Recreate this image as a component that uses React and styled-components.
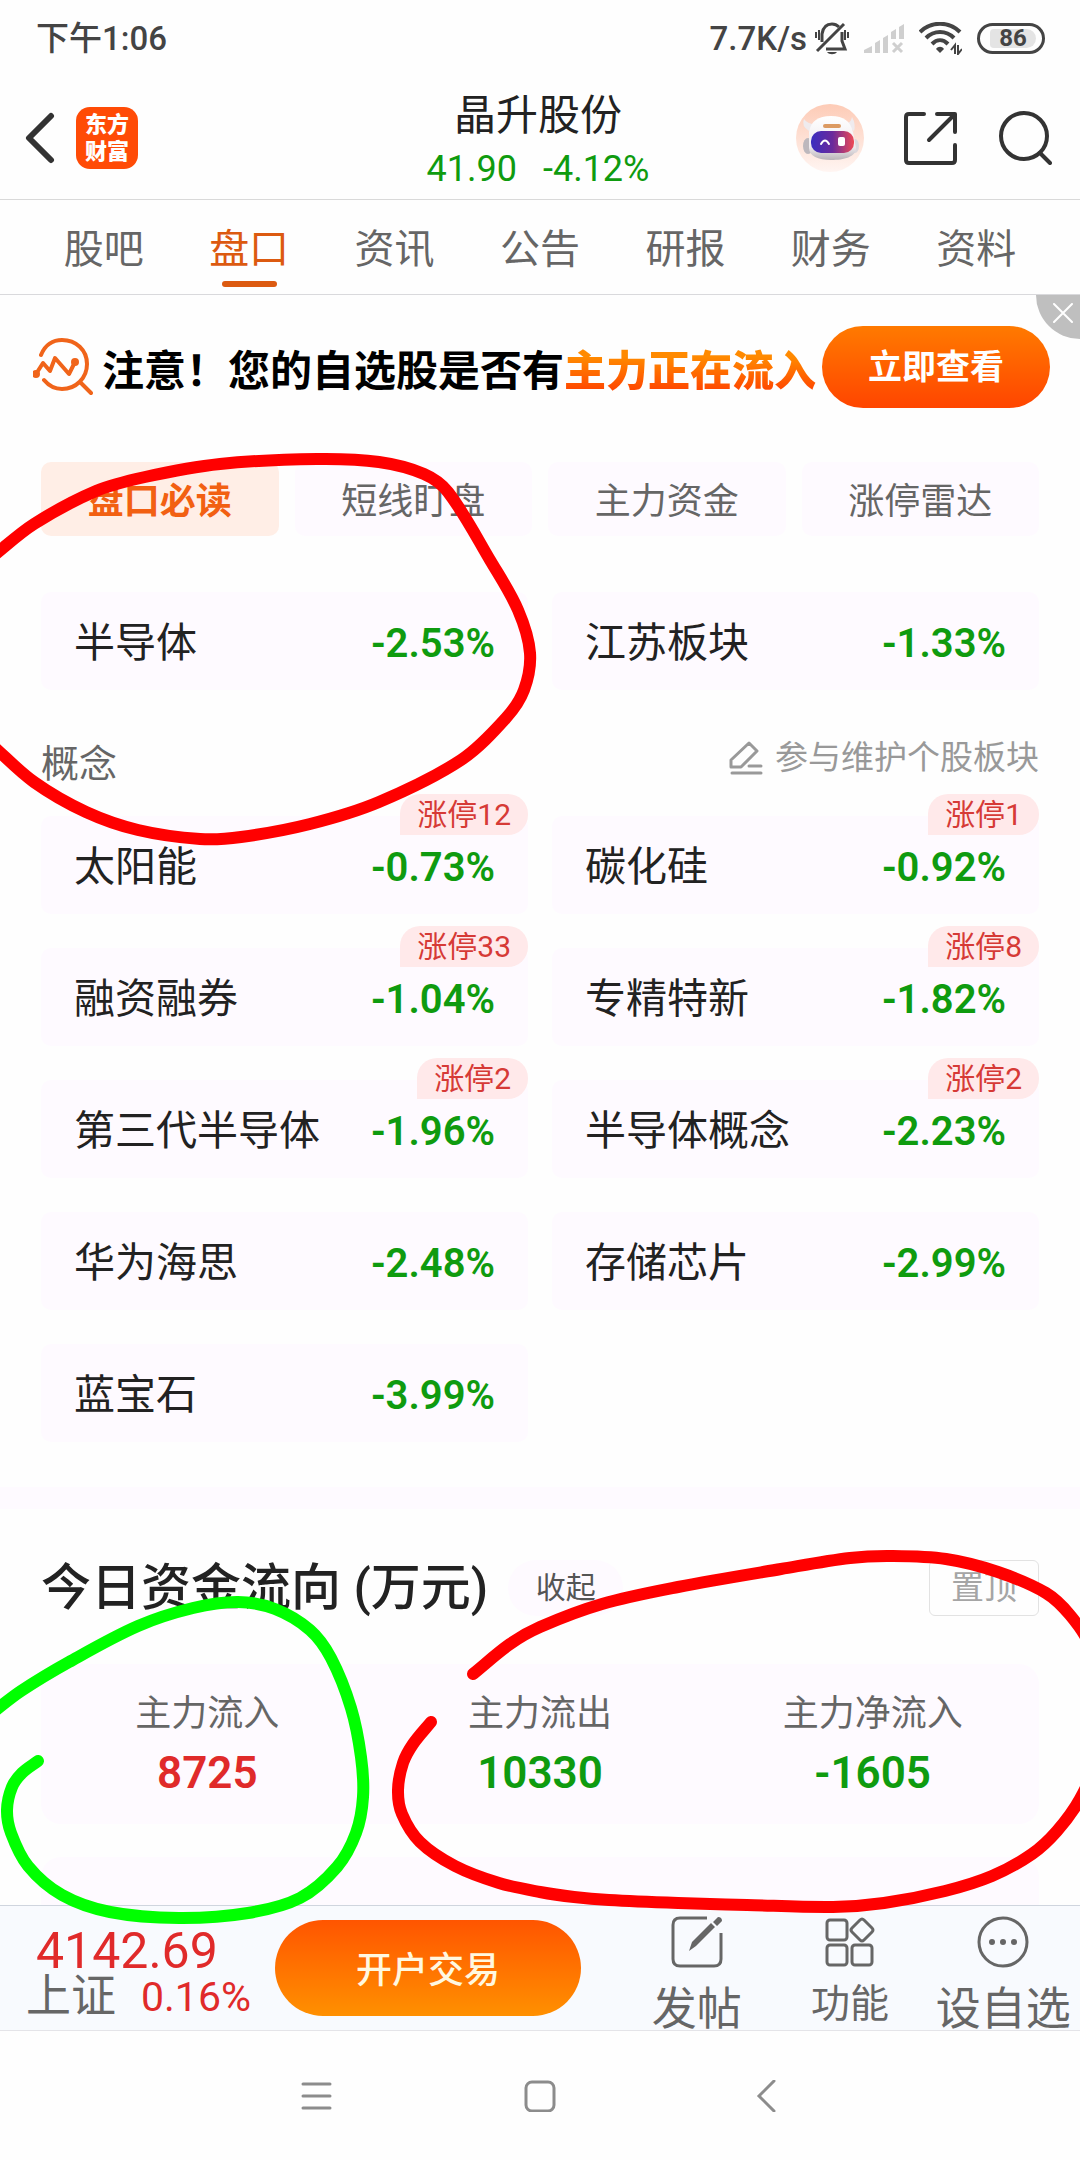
import React from 'react';
import styled, { createGlobalStyle } from 'styled-components';

const GlobalStyle = createGlobalStyle`
  * {
    box-sizing: border-box;
  }

  body {
    margin: 0;
    background: #fefefe;
    color: #222;
    font-family: Roboto, 'Noto Sans CJK SC', sans-serif;
    line-height: 1.2;
  }

  button {
    margin: 0;
    padding: 0;
    border: none;
    background: none;
    color: inherit;
    font: inherit;
    cursor: pointer;
  }

  h1, h2, h3 {
    margin: 0;
    font-weight: 400;
  }

  svg {
    display: block;
    flex: none;
  }
`;

const Page = styled.div`
  position: relative;
  display: flex;
  flex-direction: column;
  height: 100vh;
  overflow: hidden;
`;

const StatusBar = styled.div`
  display: flex;
  flex: none;
  justify-content: space-between;
  align-items: center;
  height: 76px;
  padding: 1px 35px 0 36px;
  color: #444;
  font-size: 33px;
  font-weight: 500;
`;

const StatusIcons = styled.div`
  display: flex;
  align-items: center;
  gap: 15px;
`;

const Speed = styled.div`
  display: flex;
  align-items: center;
  gap: 8px;
`;

const Battery = styled.span`
  display: flex;
  align-items: center;
  width: 68px;
  height: 31px;
  padding: 0 4px;
  border: 3px solid #444;
  border-radius: 16px;

  span {
    flex: 1;
    margin: 0 2px 0 6px;
    border-radius: 4px 10px 10px 4px;
    background: #e4e4e4;
    font-size: 24px;
    font-weight: 700;
    line-height: 19px;
    text-align: center;
  }
`;

const Header = styled.header`
  display: grid;
  flex: none;
  grid-template-columns: 1fr auto 1fr;
  align-items: center;
  height: 124px;
  padding: 0 28px 0 24px;
  border-bottom: 1px solid #d9d9d9;
`;

const HeaderLeft = styled.div`
  display: flex;
  align-items: center;
  gap: 20px;
`;

const HeaderRight = styled.div`
  display: flex;
  justify-content: flex-end;
  align-items: center;
  gap: 40px;
`;

const BrandLogo = styled.span`
  width: 62px;
  padding: 4px 0;
  border-radius: 14px;
  background: #ff4b06;
  color: #fff;
  font-size: 22px;
  font-weight: 900;
  line-height: 27px;
  text-align: center;
`;

const Stock = styled.div`
  padding-top: 8px;
  text-align: center;

  h1 {
    font-size: 42px;
    line-height: 54px;
  }

  p {
    display: flex;
    justify-content: center;
    gap: 26px;
    margin: 0;
    color: #0f9b0f;
    font-size: 36px;
    line-height: 52px;
  }
`;

const Tabs = styled.nav`
  display: flex;
  flex: none;
  padding: 0 31px;
  border-bottom: 1px solid #d9d9dc;
`;

const Tab = styled.button`
  display: flex;
  flex: 1;
  flex-direction: column;
  align-items: center;
  gap: 7px;
  padding: 26px 0 7px;
  color: ${props => (props.$active ? '#dc5a10' : '#666')};
  font-size: 40px;
  line-height: 48px;

  &::after {
    content: '';
    width: 55px;
    height: 6px;
    border-radius: 3px;
    background: ${props => (props.$active ? '#dc5a10' : 'transparent')};
  }
`;

const Content = styled.main`
  flex: 1;
  min-height: 0;
  overflow-y: auto;
  scrollbar-width: none;
`;

const Banner = styled.div`
  position: relative;
  display: flex;
  align-items: center;
  padding: 31px 30px 0 33px;
`;

const BannerText = styled.p`
  flex: 1;
  margin: 0;
  padding: 10px 0 0 9px;
  color: #000;
  font-size: 42px;
  font-weight: 700;
  line-height: 54px;
  white-space: nowrap;

  strong {
    background: linear-gradient(#ff8a00 20%, #ff4a00 85%);
    background-clip: text;
    color: transparent;
  }
`;

const BannerButton = styled.button`
  flex: none;
  width: 228px;
  height: 82px;
  border-radius: 41px;
  background: linear-gradient(#ff7a00, #ff4500);
  color: #fff;
  font-size: 34px;
  font-weight: 700;
`;

const BannerClose = styled.button`
  position: absolute;
  top: 0;
  right: 0;
  display: flex;
  justify-content: flex-end;
  width: 44px;
  height: 44px;
  padding: 8px 7px;
  border-bottom-left-radius: 44px;
  background: #bfbfbf;
`;

const Pills = styled.div`
  display: grid;
  grid-template-columns: repeat(4, 1fr);
  gap: 16px;
  padding: 54px 41px 56px;
`;

const Pill = styled.button`
  height: 74px;
  padding-top: 7px;
  border-radius: 10px;
  background: ${props => (props.$active ? '#ffeee6' : '#fefaff')};
  color: ${props => (props.$active ? '#f26012' : '#666')};
  font-size: 36px;
  font-weight: ${props => (props.$active ? 700 : 400)};
`;

const CardGrid = styled.div`
  display: grid;
  grid-template-columns: 1fr 1fr;
  gap: 34px 24px;
  padding: 0 41px;
`;

const Card = styled.div`
  position: relative;
  display: flex;
  justify-content: space-between;
  align-items: center;
  height: 98px;
  padding: 6px 33px 0;
  border-radius: 10px;
  background: #fefaff;
  font-size: 41px;

  b {
    color: #0f9b0f;
    font-size: 40px;
    font-weight: 600;
  }
`;

const Badge = styled.span`
  position: absolute;
  top: -22px;
  right: 0;
  padding: 0 17px;
  border-radius: 20px 20px 20px 0;
  background: #ffe9ea;
  color: #d63a36;
  font-size: 30px;
  line-height: 41px;
`;

const ConceptHead = styled.div`
  display: flex;
  justify-content: space-between;
  align-items: flex-start;
  padding: 49px 41px 27px;
  color: #666;

  h3 {
    font-size: 38px;
    line-height: 50px;
  }
`;

const EditButton = styled.button`
  display: flex;
  align-items: center;
  gap: 12px;
  color: #999;
  font-size: 33px;
  line-height: 38px;
`;

const Divider = styled.div`
  height: 22px;
  margin-top: 45px;
  background: #fefaff;
`;

const FlowHead = styled.div`
  display: flex;
  align-items: center;
  gap: 20px;
  padding: 49px 41px 46px;

  h2 {
    font-size: 50px;
    font-weight: 500;
    line-height: 60px;
  }
`;

const FoldButton = styled.button`
  width: 115px;
  height: 56px;
  border-radius: 28px;
  background: #fefaff;
  color: #555;
  font-size: 30px;
`;

const PinButton = styled.button`
  width: 110px;
  height: 56px;
  margin-left: auto;
  border: 1px solid #e2e2e2;
  border-radius: 6px;
  color: #a5a5a5;
  font-size: 33px;
`;

const FlowCard = styled.div`
  display: grid;
  grid-template-columns: repeat(3, 1fr);
  min-height: 160px;
  margin: 0 41px 33px;
  padding: 27px 0 15px;
  border-radius: 20px;
  background: #fefaff;
`;

const FlowItem = styled.div`
  display: flex;
  flex-direction: column;
  align-items: center;
  color: #666;
  font-size: 36px;
  line-height: 46px;

  b {
    color: ${props => (props.$up ? '#e02a2a' : '#0f9b0f')};
    font-size: 44px;
    font-weight: 600;
    line-height: 72px;
  }
`;

const BottomBar = styled.footer`
  display: flex;
  flex: none;
  align-items: center;
  height: 126px;
  border-top: 1px solid #cfd5de;
  border-bottom: 1px solid #e4e4e8;
  background: #f8fafe;
`;

const MarketIndex = styled.div`
  width: 275px;
  padding: 9px 0 0 26px;
  color: #e02a2a;

  strong {
    display: block;
    padding-left: 10px;
    font-size: 50px;
    font-weight: 400;
    line-height: 48px;
  }

  p {
    display: flex;
    align-items: center;
    gap: 25px;
    margin: 0;
    font-size: 41px;
    line-height: 44px;
  }

  span {
    color: #666;
    font-size: 45px;
  }
`;

const TradeButton = styled.button`
  width: 306px;
  height: 96px;
  margin-right: 39px;
  padding-top: 7px;
  border-radius: 48px;
  background: linear-gradient(#ff5500, #ff9000);
  color: #fff8e0;
  font-size: 36px;
  font-weight: 500;
`;

const Actions = styled.div`
  display: grid;
  flex: 1;
  grid-template-columns: repeat(3, 1fr);
  align-self: flex-start;
  align-items: start;
`;

const Action = styled.button`
  display: flex;
  flex-direction: column;
  align-items: center;
  gap: 15px;
  padding-top: 10px;
  color: #666;
  font-size: ${props => (props.$small ? 39 : 45)}px;
  line-height: ${props => (props.$small ? 42 : 54)}px;
  white-space: nowrap;
`;

const SystemNav = styled.div`
  display: flex;
  flex: none;
  justify-content: center;
  align-items: center;
  gap: 192px;
  height: 129px;
`;

const Doodle = styled.svg`
  position: absolute;
  top: 0;
  left: 0;
  width: 100%;
  pointer-events: none;
`;

const tabs = ['股吧', '盘口', '资讯', '公告', '研报', '财务', '资料'];
const pills = ['盘口必读', '短线盯盘', '主力资金', '涨停雷达'];

const sectors = [
  { name: '半导体', change: '-2.53%' },
  { name: '江苏板块', change: '-1.33%' },
];

const concepts = [
  { name: '太阳能', change: '-0.73%', limitUp: 12 },
  { name: '碳化硅', change: '-0.92%', limitUp: 1 },
  { name: '融资融券', change: '-1.04%', limitUp: 33 },
  { name: '专精特新', change: '-1.82%', limitUp: 8 },
  { name: '第三代半导体', change: '-1.96%', limitUp: 2 },
  { name: '半导体概念', change: '-2.23%', limitUp: 2 },
  { name: '华为海思', change: '-2.48%' },
  { name: '存储芯片', change: '-2.99%' },
  { name: '蓝宝石', change: '-3.99%' },
];

const flows = [
  { label: '主力流入', value: '8725', up: true },
  { label: '主力流出', value: '10330' },
  { label: '主力净流入', value: '-1605' },
];

// hand drawn marker lines
const strokes = [
  {
    color: '#ff0000',
    points: [
      [-8, 557], [34, 524], [96, 491], [145, 477], [220, 464], [317, 459], [379, 462],
      [424, 474], [448, 492], [490, 560], [518, 610], [530, 653], [524, 690], [506, 718],
      [461, 760], [379, 802], [310, 824], [241, 837], [200, 839], [138, 830], [86, 812],
      [34, 782], [-8, 745],
    ],
  },
  {
    color: '#00ff00',
    points: [
      [-8, 1713], [21, 1691], [69, 1662], [138, 1626], [193, 1608], [238, 1602], [275, 1609],
      [310, 1630], [331, 1658], [351, 1708], [361, 1757], [363, 1797], [356, 1833],
      [337, 1867], [300, 1898], [248, 1913], [179, 1918], [110, 1912], [62, 1895],
      [28, 1866], [11, 1833], [7, 1810], [12, 1787], [22, 1773], [38, 1761],
    ],
  },
  {
    color: '#ff0000',
    points: [
      [473, 1674], [510, 1644], [540, 1627], [602, 1604], [678, 1587], [781, 1569],
      [850, 1558], [891, 1556], [946, 1559], [998, 1572], [1046, 1593], [1070, 1615],
      [1090, 1646], [1100, 1700], [1096, 1760], [1080, 1799], [1057, 1831], [1032, 1854],
      [992, 1876], [945, 1891], [884, 1903], [833, 1907], [747, 1905], [678, 1903],
      [609, 1900], [574, 1897], [540, 1892], [499, 1883], [455, 1866], [420, 1842],
      [402, 1814], [398, 1790], [403, 1763], [413, 1744], [431, 1722],
    ],
  },
];

const dist = (a, b) => Math.hypot(b[0] - a[0], b[1] - a[1]);

// tangent at every point follows its two neighbours
const toPath = (pts) => {
  const tangents = pts.map((p, i) => {
    const a = pts[i - 1] || p;
    const b = pts[i + 1] || p;
    const len = dist(a, b);
    return [(b[0] - a[0]) / len, (b[1] - a[1]) / len];
  });
  let d = `M${pts[0]}`;
  for (let i = 0; i < pts.length - 1; i++) {
    const [p, q] = [pts[i], pts[i + 1]];
    const [t, u] = [tangents[i], tangents[i + 1]];
    const k = dist(p, q) / 3;
    d += ` C${p[0] + t[0] * k},${p[1] + t[1] * k} ${q[0] - u[0] * k},${q[1] - u[1] * k} ${q}`;
  }
  return d;
};

const MuteIcon = () => (
  <svg width="34" height="33" viewBox="0 0 34 33" fill="none" stroke="#444" strokeWidth="3">
    <path d="M7 20V12C8 5 12 2 17 2c3 0 5 1 7 3M27 10v9l3 8H11" />
    <path d="M2 29L29 2" />
    <path d="M12 30c2 3 8 3 10 0z" fill="#444" stroke="none" />
    <path d="M1 10v6M4 8v10M30 8v10M33 10v6" strokeWidth="2" />
  </svg>
);

const SignalIcon = () => (
  <svg width="40" height="30" viewBox="0 0 40 30" fill="#cfcfcf">
    <path d="M0 29v-3l8-4v7zM11 19l5-3v13h-5zM19 14l5-3v18h-5zM27 8l5-3v10h-5zM35 3l5-3v15h-5z" />
    <path d="M29 19l9 9M38 19l-9 9" stroke="#cfcfcf" strokeWidth="3" />
  </svg>
);

const WifiIcon = () => (
  <svg width="43" height="33" viewBox="0 0 43 33" fill="none" stroke="#444" strokeWidth="4">
    <path d="M1 10C12-1 30-1 41 10M7 16c8-8 20-8 28 0M13 22c5-5 11-5 16 0" />
    <path d="M17 27c2-3 6-3 8 0l-4 4z" fill="#444" stroke="none" />
    <path d="M36 32v-9l-4 5M39 23v9l4-5" strokeWidth="2" />
  </svg>
);

const BackIcon = () => (
  <svg width="32" height="52" viewBox="0 0 32 52" fill="none" stroke="#333" strokeWidth="6" strokeLinecap="round" strokeLinejoin="round">
    <path d="M27 4L5 26l22 22" />
  </svg>
);

const RobotIcon = () => (
  <svg width="68" height="68" viewBox="0 0 68 68">
    <defs>
      <linearGradient id="robotBg" x1="0" y1="0" x2="0" y2="1">
        <stop offset="0" stopColor="#fdcbb6" />
        <stop offset="1" stopColor="#fff5f2" />
      </linearGradient>
      <linearGradient id="robotHead" x1="0" y1="0" x2="0" y2="1">
        <stop offset="0" stopColor="#fff" />
        <stop offset="0.7" stopColor="#efebee" />
        <stop offset="1" stopColor="#b9b3b8" />
      </linearGradient>
      <linearGradient id="robotVisor" x1="0" y1="0" x2="1" y2="0">
        <stop offset="0" stopColor="#3a2fc0" />
        <stop offset="0.5" stopColor="#6a2a9c" />
        <stop offset="1" stopColor="#ee4a55" />
      </linearGradient>
    </defs>
    <circle cx="34" cy="34" r="34" fill="url(#robotBg)" />
    <path d="M8 15q-3 7 5 12l8-7q-9 1-13-5zM56 13q4 7 2 14l-9-7q6-1 7-7z" fill="#efebee" />
    <ellipse cx="12" cy="42" rx="5" ry="8" fill="#bdb8bd" />
    <ellipse cx="59" cy="42" rx="4" ry="7" fill="#ddd8dc" />
    <path d="M13 28C15 17 22 12 35 12s19 5 22 16l3 16c0 9-12 12-25 12s-22-4-22-12z" fill="url(#robotHead)" />
    <rect x="27" y="20" width="18" height="4" rx="2" fill="#dc9a62" />
    <rect x="15" y="27" width="43" height="22" rx="10" fill="url(#robotVisor)" />
    <path d="M25 40q4-7 8 0" fill="none" stroke="#fff" strokeWidth="2" strokeLinecap="round" />
    <rect x="42" y="33" width="7" height="9" rx="2" fill="#fff" />
  </svg>
);

const ShareIcon = () => (
  <svg width="54" height="54" viewBox="0 0 54 54" fill="none" stroke="#333" strokeWidth="4" strokeLinecap="round" strokeLinejoin="round">
    <path d="M20 3H5q-3 0-3 3v43q0 3 3 3h43q3 0 3-3V34M33 3h18v18M50 4L25 29" />
  </svg>
);

const SearchIcon = () => (
  <svg width="54" height="54" viewBox="0 0 54 54" fill="none" stroke="#333" strokeWidth="4" strokeLinecap="round">
    <circle cx="26" cy="25" r="23" />
    <path d="M42 42l10 10" />
  </svg>
);

const TrendIcon = () => (
  <svg width="60" height="58" viewBox="0 0 60 58" fill="none" stroke="#f0641a" strokeWidth="4" strokeLinecap="round" strokeLinejoin="round">
    <path d="M8 17C12 7 20 2 29 2c14 0 25 10 25 24S43 51 29 51c-7 0-13-3-18-9M47 44l11 11" />
    <path d="M3 36l7-11 7 8 5-13 14 16 6-12" />
    <circle cx="3" cy="36" r="2" />
    <circle cx="42" cy="24" r="2" />
  </svg>
);

const PencilIcon = () => (
  <svg width="34" height="34" viewBox="0 0 34 34" fill="none" stroke="#999" strokeWidth="3" strokeLinecap="round" strokeLinejoin="round">
    <path d="M20 2l8 8-16 16H2v-7zM20 25h12M3 32h29" />
  </svg>
);

const PostIcon = () => (
  <svg width="52" height="52" viewBox="0 0 52 52" fill="none" stroke="#666" strokeWidth="3">
    <path d="M36 2H9q-7 0-7 7v34q0 7 7 7h34q7 0 7-7V17" />
    <path d="M18 35l3-9L40 7l4 4-19 19zM42 6l5-5q4 0 4 4l-5 5z" fill="#666" stroke="none" />
  </svg>
);

const GridIcon = () => (
  <svg width="52" height="52" viewBox="0 0 52 52" fill="none" stroke="#666" strokeWidth="3">
    <rect x="3" y="4" width="20" height="20" rx="3" />
    <rect x="3" y="29" width="20" height="20" rx="3" />
    <rect x="28" y="29" width="20" height="20" rx="3" />
    <path d="M36 4q2-2 4 0l8 8q2 2 0 4l-8 8q-2 2-4 0l-8-8q-2-2 0-4z" />
  </svg>
);

const MoreIcon = () => (
  <svg width="52" height="52" viewBox="0 0 52 52" fill="#666">
    <circle cx="26" cy="26" r="24" fill="none" stroke="#666" strokeWidth="3" />
    <circle cx="15" cy="26" r="3" />
    <circle cx="26" cy="26" r="3" />
    <circle cx="37" cy="26" r="3" />
  </svg>
);

const SectorCard = ({ sector }) => (
  <Card>
    <span>{sector.name}</span>
    <b>{sector.change}</b>
    {sector.limitUp && <Badge>涨停{sector.limitUp}</Badge>}
  </Card>
);

class App extends React.Component {
  state = {
    tab: '盘口',
    pill: '盘口必读'
  }

  render() {
    const { tab, pill } = this.state
    return (
      <Page>
        <GlobalStyle />
        <StatusBar>
          <span>下午1:06</span>
          <StatusIcons>
            <Speed>
              <span>7.7K/s</span>
              <MuteIcon />
            </Speed>
            <SignalIcon />
            <WifiIcon />
            <Battery><span>86</span></Battery>
          </StatusIcons>
        </StatusBar>

        <Header>
          <HeaderLeft>
            <button aria-label="返回"><BackIcon /></button>
            <BrandLogo>东方<br />财富</BrandLogo>
          </HeaderLeft>
          <Stock>
            <h1>晶升股份</h1>
            <p>
              <span>41.90</span>
              <span>-4.12%</span>
            </p>
          </Stock>
          <HeaderRight>
            <button aria-label="助手"><RobotIcon /></button>
            <button aria-label="分享"><ShareIcon /></button>
            <button aria-label="搜索"><SearchIcon /></button>
          </HeaderRight>
        </Header>

        <Tabs>
          {tabs.map(name => (
            <Tab key={name} $active={name === tab} onClick={() => this.setState({ tab: name })}>
              {name}
            </Tab>
          ))}
        </Tabs>

        <Content>
          <Banner>
            <TrendIcon />
            <BannerText>注意！您的自选股是否有<strong>主力正在流入</strong></BannerText>
            <BannerButton>立即查看</BannerButton>
            <BannerClose aria-label="关闭">
              <svg width="20" height="20" viewBox="0 0 20 20" stroke="#fff" strokeWidth="2" strokeLinecap="round">
                <path d="M1 1l18 18M19 1L1 19" />
              </svg>
            </BannerClose>
          </Banner>

          <Pills>
            {pills.map(name => (
              <Pill key={name} $active={name === pill} onClick={() => this.setState({ pill: name })}>
                {name}
              </Pill>
            ))}
          </Pills>

          <CardGrid>
            {sectors.map(sector => <SectorCard key={sector.name} sector={sector} />)}
          </CardGrid>

          <ConceptHead>
            <h3>概念</h3>
            <EditButton>
              <PencilIcon />
              参与维护个股板块
            </EditButton>
          </ConceptHead>

          <CardGrid>
            {concepts.map(sector => <SectorCard key={sector.name} sector={sector} />)}
          </CardGrid>

          <Divider />

          <FlowHead>
            <h2>今日资金流向 (万元)</h2>
            <FoldButton>收起</FoldButton>
            <PinButton>置顶</PinButton>
          </FlowHead>
          <FlowCard>
            {flows.map(flow => (
              <FlowItem key={flow.label} $up={flow.up}>
                {flow.label}
                <b>{flow.value}</b>
              </FlowItem>
            ))}
          </FlowCard>
          <FlowCard />
        </Content>

        <BottomBar>
          <MarketIndex>
            <strong>4142.69</strong>
            <p><span>上证</span>0.16%</p>
          </MarketIndex>
          <TradeButton>开户交易</TradeButton>
          <Actions>
            <Action><PostIcon />发帖</Action>
            <Action $small><GridIcon />功能</Action>
            <Action><MoreIcon />设自选</Action>
          </Actions>
        </BottomBar>

        <SystemNav>
          <button aria-label="菜单">
            <svg width="32" height="32" viewBox="0 0 32 32" stroke="#8c8c8c" strokeWidth="3" strokeLinecap="round">
              <path d="M3 4h27M3 16h27M3 28h27" />
            </svg>
          </button>
          <button aria-label="主页">
            <svg width="32" height="32" viewBox="0 0 32 32" fill="none" stroke="#8c8c8c" strokeWidth="3">
              <rect x="2" y="2" width="28" height="29" rx="6" />
            </svg>
          </button>
          <button aria-label="后退">
            <svg width="32" height="32" viewBox="0 0 32 32" fill="none" stroke="#8c8c8c" strokeWidth="3" strokeLinecap="round">
              <path d="M26 1L11 16l15 15" />
            </svg>
          </button>
        </SystemNav>

        <Doodle viewBox="0 0 1080 2160" fill="none" strokeWidth="12" strokeLinecap="round" strokeLinejoin="round">
          {strokes.map((stroke, i) => (
            <path key={i} d={toPath(stroke.points)} stroke={stroke.color} />
          ))}
        </Doodle>
      </Page>
    )
  }
}

export default App;
